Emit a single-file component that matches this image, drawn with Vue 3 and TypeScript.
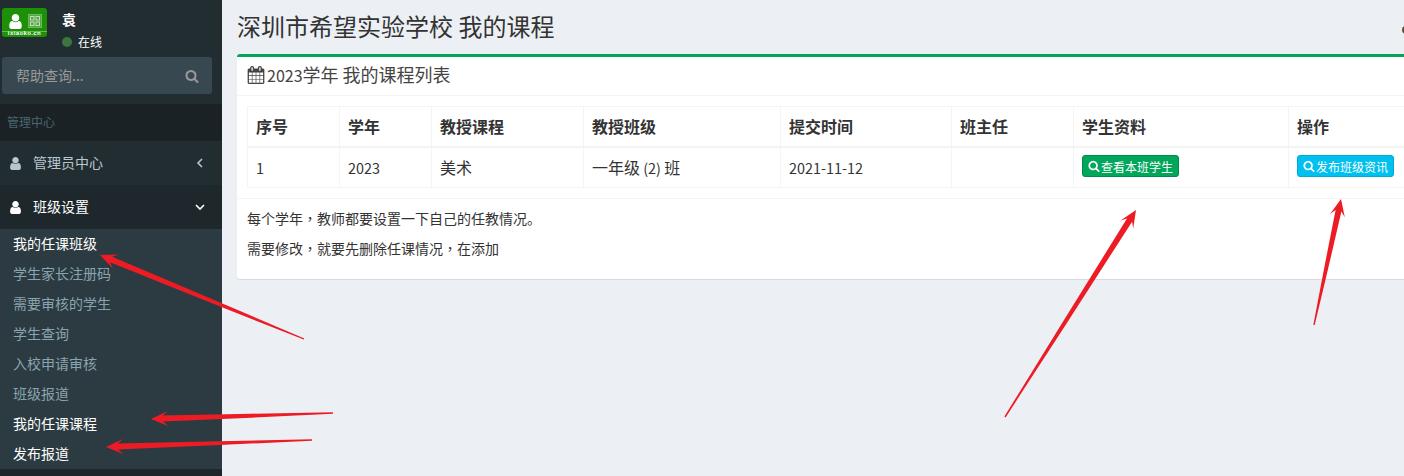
<script setup lang="ts">
const searchPath = 'M1216 832q0-185-131.5-316.5t-316.5-131.5-316.5 131.5-131.5 316.5 131.5 316.5 316.5 131.5 316.5-131.5 131.5-316.5zm512 832q0 52-38 90t-90 38q-54 0-90-38l-343-342q-179 124-399 124-143 0-273.5-55.5t-225-150-150-225-55.5-273.5 55.5-273.5 150-225 225-150 273.5-55.5 273.5 55.5 225 150 150 225 55.5 273.5q0 220-124 399l343 343q37 37 37 90z'
const userPath = 'M1536 1399q0 109-62.5 187t-150.5 78h-854q-88 0-150.5-78t-62.5-187q0-85 8.5-160.5t31.5-152 58.5-131 94-89 134.5-34.5q131 128 313 128t313-128q76 0 134.5 34.5t94 89 58.5 131 31.5 152 8.5 160.5zm-256-887q0 159-112.5 271.5t-271.5 112.5-271.5-112.5-112.5-271.5 112.5-271.5 271.5-112.5 271.5 112.5 112.5 271.5z'
const calendarPath = 'M192 1664h288v-288h-288v288zm352 0h320v-288h-320v288zm-352-352h288v-320h-288v320zm352 0h320v-320h-320v320zm-352-384h288v-288h-288v288zm736 736h320v-288h-320v288zm-384-736h320v-288h-320v288zm768 736h288v-288h-288v288zm-384-352h320v-320h-320v320zm-352-864v-288q0-13-9.5-22.5t-22.5-9.5h-64q-13 0-22.5 9.5t-9.5 22.5v288q0 13 9.5 22.5t22.5 9.5h64q13 0 22.5-9.5t9.5-22.5zm736 864h288v-320h-288v320zm-384-384h320v-288h-320v288zm384 0h288v-288h-288v288zm32-480v-288q0-13-9.5-22.5t-22.5-9.5h-64q-13 0-22.5 9.5t-9.5 22.5v288q0 13 9.5 22.5t22.5 9.5h64q13 0 22.5-9.5t9.5-22.5zm384-64v1280q0 52-38 90t-90 38h-1408q-52 0-90-38t-38-90v-1280q0-52 38-90t90-38h128v-96q0-66 47-113t113-47h64q66 0 113 47t47 113v96h384v-96q0-66 47-113t113-47h64q66 0 113 47t47 113v96h128q52 0 90 38t38 90z'

const subItems = [
  { label: '我的任课班级', on: true },
  { label: '学生家长注册码', on: false },
  { label: '需要审核的学生', on: false },
  { label: '学生查询', on: false },
  { label: '入校申请审核', on: false },
  { label: '班级报道', on: false },
  { label: '我的任课课程', on: true },
  { label: '发布报道', on: true },
]

const headers = ['序号', '学年', '教授课程', '教授班级', '提交时间', '班主任', '学生资料', '操作']
const colWidths = [92, 92, 152, 197, 171, 122, 215, 130]

function arrow(tx: number, ty: number, hx: number, hy: number): string {
  const len = Math.hypot(hx - tx, hy - ty)
  const ux = (hx - tx) / len
  const uy = (hy - ty) / len
  const nx = -uy
  const ny = ux
  const at = (back: number, side: number) =>
    `${(hx - ux * back + nx * side).toFixed(1)},${(hy - uy * back + ny * side).toFixed(1)}`
  return [
    at(0, 0),
    at(17, 7.5),
    at(12, 3),
    at(len * 0.55, 2),
    at(len, 0.7),
    at(len, -0.7),
    at(len * 0.55, -2),
    at(12, -3),
    at(17, -7.5),
  ].join(' ')
}

const arrows = [
  arrow(304, 339, 100, 255),
  arrow(333, 413, 151, 419),
  arrow(312, 440, 106, 447),
  arrow(1005, 417, 1136, 210),
  arrow(1314, 325, 1341, 199),
]
</script>

<template>
  <div class="page">
    <aside class="sidebar">
      <div class="user-panel">
        <div class="logo">
          <div class="logo-top">
            <svg class="logo-user" viewBox="256 128 1280 1536"><path :d="userPath" fill="#fff" /></svg>
            <svg class="logo-qr" viewBox="0 0 14 14">
              <rect x="0.5" y="0.5" width="13" height="13" fill="#55a545" stroke="#6fb862" />
              <rect x="2.5" y="2.5" width="3.5" height="3.5" fill="none" stroke="#bfe0b8" />
              <rect x="8" y="2.5" width="3.5" height="3.5" fill="none" stroke="#bfe0b8" />
              <rect x="2.5" y="8" width="3.5" height="3.5" fill="none" stroke="#bfe0b8" />
              <rect x="8" y="8" width="3.5" height="3.5" fill="none" stroke="#bfe0b8" />
            </svg>
          </div>
          <div class="logo-text">ixiaoko.cn</div>
        </div>
        <div class="user-info">
          <div class="user-name">袁</div>
          <div class="user-status"><i class="dot"></i>在线</div>
        </div>
      </div>

      <div class="search">
        <span>帮助查询...</span>
        <svg class="search-icon" viewBox="0 0 1792 1792"><path :d="searchPath" fill="#999" /></svg>
      </div>

      <div class="menu-header">管理中心</div>

      <div class="menu-item">
        <svg class="menu-icon" viewBox="256 128 1280 1536"><path :d="userPath" fill="#b8c7ce" /></svg>
        <span class="menu-label">管理员中心</span>
        <svg class="chev" viewBox="0 0 8 10"><path d="M6 1 2 5l4 4" fill="none" stroke="#b8c7ce" stroke-width="1.6" /></svg>
      </div>
      <div class="menu-item open">
        <svg class="menu-icon" viewBox="256 128 1280 1536"><path :d="userPath" fill="#fff" /></svg>
        <span class="menu-label">班级设置</span>
        <svg class="chev" viewBox="0 0 10 8"><path d="M1 2l4 4 4-4" fill="none" stroke="#fff" stroke-width="1.6" /></svg>
      </div>
      <ul class="submenu">
        <li v-for="s in subItems" :key="s.label" :class="{ on: s.on }">{{ s.label }}</li>
      </ul>
      <div class="sidebar-rest"></div>
    </aside>

    <main class="main">
      <header class="content-header">
        <h1>深圳市希望实验学校 我的课程</h1>
        <div class="crumb"><i></i></div>
      </header>

      <section class="box">
        <div class="box-header">
          <svg class="cal" viewBox="0 0 1792 1792"><path :d="calendarPath" fill="#444" /></svg>
          <h3><span class="num-lg">2023</span>学年 我的课程列表</h3>
        </div>
        <div class="box-body">
          <table>
            <colgroup>
              <col v-for="(w, i) in colWidths" :key="i" :style="{ width: w + 'px' }" />
            </colgroup>
            <thead>
              <tr><th v-for="h in headers" :key="h">{{ h }}</th></tr>
            </thead>
            <tbody>
              <tr>
                <td><span class="num">1</span></td>
                <td><span class="num">2023</span></td>
                <td>美术</td>
                <td>一年级<span class="num"> (2) </span>班</td>
                <td><span class="num">2021-11-12</span></td>
                <td></td>
                <td>
                  <span class="btn green">
                    <svg viewBox="0 0 1792 1792"><path :d="searchPath" fill="#fff" /></svg>查看本班学生
                  </span>
                </td>
                <td>
                  <span class="btn blue">
                    <svg viewBox="0 0 1792 1792"><path :d="searchPath" fill="#fff" /></svg>发布班级资讯
                  </span>
                </td>
              </tr>
            </tbody>
          </table>
        </div>
        <div class="box-footer">
          <p>每个学年<span class="tc">，</span>教师都要设置一下自己的任教情况。</p>
          <p>需要修改<span class="tc">，</span>就要先删除任课情况<span class="tc">，</span>在添加</p>
        </div>
      </section>
    </main>

    <svg class="arrows" viewBox="0 0 1404 476">
      <polygon v-for="(p, i) in arrows" :key="i" :points="p" fill="#ed1c24" />
    </svg>
  </div>
</template>

<style scoped>
.page {
  position: relative;
  display: flex;
  width: 1404px;
  height: 476px;
  overflow: hidden;
  background: #ecf0f5;
  color: #333;
  font-family: "Noto Sans CJK SC", "Noto Sans", sans-serif;
  font-size: 14px;
}

/* sidebar */
.sidebar {
  flex: none;
  display: flex;
  flex-direction: column;
  width: 222px;
  background: #222d32;
}
.user-panel {
  display: flex;
  height: 57px;
  padding: 8px 0 0 2px;
  box-sizing: border-box;
}
.logo {
  width: 45px;
  height: 29px;
  border-radius: 3px;
  background: #1e9008;
  overflow: hidden;
}
.logo-top {
  display: flex;
  align-items: center;
  gap: 6px;
  height: 24px;
  padding: 3px 0 0 7px;
  box-sizing: border-box;
  border-bottom: 1px solid #6cb85c;
}
.logo-user { width: 13px; height: 15px; }
.logo-qr { width: 14px; height: 14px; }
.logo-text {
  margin-top: -3px;
  font-family: "Liberation Sans", sans-serif;
  font-size: 6px;
  line-height: 8px;
  font-weight: 700;
  letter-spacing: 0.4px;
  text-align: center;
  color: #fff;
}
.user-info { margin-left: 15px; color: #fff; }
.user-name {
  margin-top: 1px;
  font-size: 14px;
  line-height: 20px;
  font-weight: 600;
}
.user-status {
  display: flex;
  align-items: center;
  margin-top: 3px;
  font-size: 12px;
  line-height: 20px;
}
.dot {
  width: 10px;
  height: 10px;
  margin-right: 6px;
  border-radius: 50%;
  background: #3c763d;
}
.search {
  display: flex;
  align-items: center;
  justify-content: space-between;
  width: 210px;
  height: 37px;
  margin-left: 2px;
  padding: 0 13px 0 14px;
  box-sizing: border-box;
  border-radius: 3px;
  background: #374850;
  color: #999;
}
.search span { margin-top: -2px; }
.search-icon { width: 14px; height: 14px; }
.menu-header {
  height: 37px;
  margin-top: 10px;
  padding: 9px 0 0 7px;
  box-sizing: border-box;
  background: #1a2226;
  color: #4b646f;
  font-size: 12px;
  line-height: 17px;
}
.menu-item {
  display: flex;
  align-items: center;
  height: 44px;
  padding: 0 17px 0 10px;
  box-sizing: border-box;
  color: #b8c7ce;
}
.menu-item.open {
  background: #1e282c;
  color: #fff;
}
.menu-icon { width: 11px; height: 13px; margin-right: 12px; }
.menu-label { flex: 1; margin-top: -2px; }
.chev { width: 10px; height: 10px; }
.submenu {
  margin: 0;
  padding: 0;
  list-style: none;
  background: #2c3b41;
}
.submenu li {
  height: 30px;
  padding-left: 13px;
  line-height: 28px;
  color: #8aa4af;
}
.submenu li.on { color: #fff; }
.sidebar-rest { flex: 1; background: #1e282c; }

/* main */
.main {
  flex: none;
  width: 1221px;
  padding: 0 15px;
  box-sizing: border-box;
}
.content-header {
  display: flex;
  align-items: center;
  height: 54px;
  padding-bottom: 2px;
  box-sizing: border-box;
  margin-right: -15px;
}
h1 {
  flex: 1;
  margin: 0;
  font-size: 24px;
  line-height: 26px;
  font-weight: 400;
  color: #333;
}
.crumb { width: 41px; }
.crumb i {
  display: block;
  width: 8px;
  height: 8px;
  margin-top: 8px;
  border-radius: 50%;
  background: #5c4a3a;
}
.box {
  height: 225px;
  box-sizing: border-box;
  border-top: 3px solid #00a65a;
  border-radius: 3px;
  background: #fff;
  box-shadow: 0 1px 1px rgba(0, 0, 0, 0.1);
}
.box-header {
  display: flex;
  align-items: center;
  height: 39px;
  padding: 0 10px 3px;
  box-sizing: border-box;
  border-bottom: 1px solid #f4f4f4;
  color: #444;
}
.cal { width: 18px; height: 18px; margin-right: 2px; }
h3 {
  margin: 0;
  font-size: 18px;
  line-height: 20px;
  font-weight: 400;
}
.num-lg { font-size: 16px; }
.box-body {
  height: 102px;
  padding: 10px;
  box-sizing: border-box;
}
table {
  width: 1171px;
  table-layout: fixed;
  border-collapse: collapse;
  font-size: 16px;
}
th, td {
  border: 1px solid #f4f4f4;
  padding: 0 8px 2px;
  text-align: left;
  overflow: hidden;
  white-space: nowrap;
}
th {
  height: 37px;
  border-bottom-width: 2px;
  font-weight: 600;
}
td { height: 37px; }
.num { font-size: 14.4px; }
.btn {
  display: inline-flex;
  align-items: center;
  width: 97px;
  height: 22px;
  margin-bottom: 3px;
  padding-left: 5px;
  box-sizing: border-box;
  border-radius: 3px;
  border: 1px solid;
  color: #fff;
  font-size: 12px;
  vertical-align: middle;
}
.btn svg { width: 12px; height: 12px; margin-right: 1px; }
.green { background: #00a65a; border-color: #008d4c; }
.blue { background: #00c0ef; border-color: #00acd6; }
.box-footer {
  padding: 9px 10px 0;
  border-top: 1px solid #f4f4f4;
}
.box-footer p {
  margin: 0 0 10px;
  line-height: 20px;
}
.tc { font-family: "Noto Sans CJK TC", sans-serif; }

/* annotation layer */
.arrows {
  position: absolute;
  inset: 0;
  width: 1404px;
  height: 476px;
  pointer-events: none;
}
</style>
